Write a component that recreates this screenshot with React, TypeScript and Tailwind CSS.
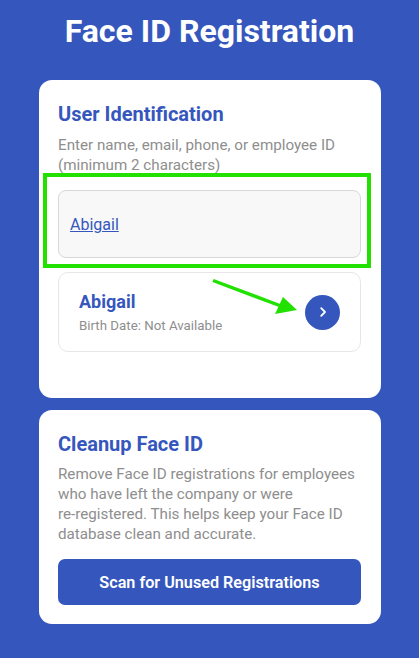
export default function App() {
  return (
    <div className="relative h-[658px] w-[419px] overflow-hidden bg-[#3557bd] font-['Roboto',sans-serif]">
      <h1 className="pt-[11px] pb-[1px] text-center text-[32px] font-bold leading-[40px] text-white">Face ID Registration</h1>
      <div className="ml-[38.5px] mr-[38.5px] mt-[28px] flex flex-col gap-[12px]">
        <section className="h-[318px] rounded-[13px] bg-white px-[19.5px] pt-[22px]">
          <h2 className="text-[20px] font-bold leading-[24px] text-[#3557bd]">User Identification</h2>
          <p className="mt-[10px] text-[15.2px] leading-[19.5px] text-[#8e8e8e]">
            Enter name, email, phone, or employee ID (minimum 2 characters)
          </p>
          <div className="mt-[15px] flex h-[68px] items-center rounded-[8px] border border-[#d8d8d8] bg-[#f8f8f8] px-[11px] pt-[2px]">
            <span className="text-[16px] text-[#3557bd] underline">Abigail</span>
          </div>
          <div className="mt-[14px] flex h-[80px] items-center justify-between rounded-[10px] border border-[#e6e6e6] bg-white pl-[20px] pr-[20px]">
            <div className="pt-[1px]">
              <div className="text-[18px] font-bold leading-[22px] text-[#3557bd]">Abigail</div>
              <div className="mt-[5px] text-[13.3px] leading-[16px] text-[#8e8e8e]">Birth Date: Not Available</div>
            </div>
            <div className="flex h-[35px] w-[35px] items-center justify-center rounded-full bg-[#3557bd]">
              <svg width="14" height="14" viewBox="0 0 14 14" fill="none" stroke="white" strokeWidth="1.8" strokeLinecap="round" strokeLinejoin="round">
                <path d="M5.2 3.2 9 7l-3.8 3.8" />
              </svg>
            </div>
          </div>
        </section>
        <section className="h-[214px] rounded-[13px] bg-white px-[19.5px] pt-[22px]">
          <h2 className="text-[20px] font-bold leading-[24px] text-[#3557bd]">Cleanup Face ID</h2>
          <p className="mt-[8px] text-[15.2px] leading-[20px] text-[#8e8e8e]">
            Remove Face ID registrations for employees who have left the company or were<br />re-registered. This helps keep your Face ID database clean and accurate.
          </p>
          <button className="mt-[15px] flex h-[46px] w-full items-center justify-center rounded-[7px] bg-[#3557bd] pt-[2px] text-[16.2px] font-semibold text-white">
            Scan for Unused Registrations
          </button>
        </section>
      </div>
      <div className="absolute left-[43px] top-[173px] h-[95px] w-[328px] border-[4px] border-[#22e000]" />
      <svg className="absolute left-[205px] top-[272px]" width="100" height="50" viewBox="0 0 100 50" fill="none">
        <path d="M8 8.5 L76 34" stroke="#22e000" strokeWidth="3.4" />
        <path d="M92 38 L70 42 L78 25 Z" fill="#22e000" />
      </svg>
    </div>
  );
}
